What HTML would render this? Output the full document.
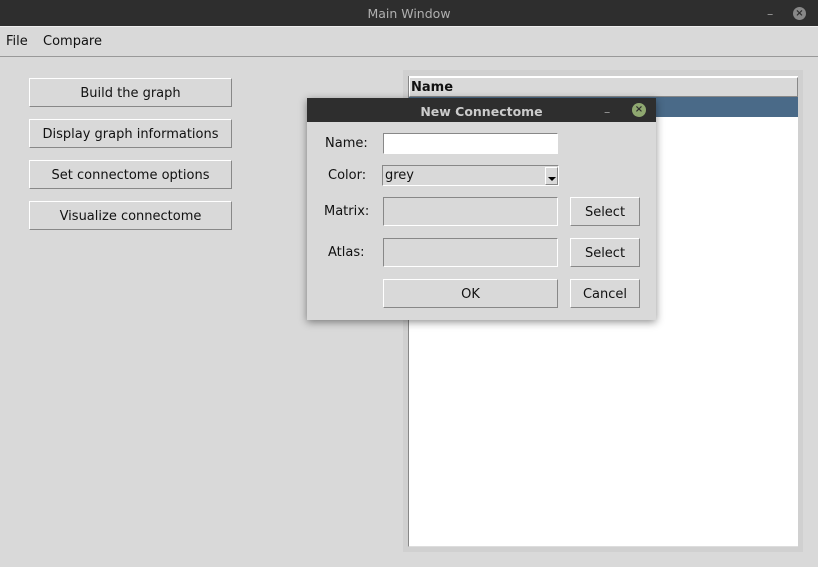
<!DOCTYPE html>
<html><head><style>
*{box-sizing:border-box;margin:0;padding:0}
body{width:818px;height:567px;background:#d9d9d9;font-family:"DejaVu Sans","Liberation Sans",sans-serif;font-size:13px;color:#111;position:relative;overflow:hidden}
.abs{position:absolute}
.tb{left:0;top:0;width:818px;height:26px;background:#2e2e2e;color:#b0b0b0;text-align:center;line-height:28px;font-size:12.5px}
.menu{left:0;top:26px;width:818px;height:31px;border-bottom:1px solid #999;border-top:1px solid #eee}
.btn{position:absolute;border:1px solid;border-color:#fff #888 #888 #fff;background:#d9d9d9;text-align:center;line-height:29px!important}
.ent{position:absolute;border:1px solid;border-color:#888 #fff #fff #888}
.lbl{position:absolute}
</style></head><body>
<div class="abs tb">Main Window
<span class="abs" style="left:767px;top:0;color:#999">–</span>
<span class="abs" style="left:793px;top:7px;width:13px;height:13px;border-radius:50%;background:#888;color:#2e2e2e;font-size:10px;line-height:13px;font-weight:bold">×</span></div>
<div class="abs menu"><span class="abs" style="left:6px;top:7px">File</span><span class="abs" style="left:43px;top:7px">Compare</span></div>

<div class="btn" style="left:29px;top:78px;width:203px;height:29px">Build the graph</div>
<div class="btn" style="left:29px;top:119px;width:203px;height:29px">Display graph informations</div>
<div class="btn" style="left:29px;top:160px;width:203px;height:29px">Set connectome options</div>
<div class="btn" style="left:29px;top:201px;width:203px;height:29px">Visualize connectome</div>

<div class="abs" style="left:403px;top:70px;width:400px;height:482px;background:#d0d0d0"></div>
<div class="abs" style="left:408px;top:76px;width:390px;height:471px;background:#fff;border-left:1px solid #888;border-bottom:1px solid #ddd"></div>
<div class="abs" style="left:409px;top:77px;width:389px;height:20px;background:#d9d9d9;border:1px solid;border-color:#fff #888 #888 #fff;font-weight:bold;padding-left:1px;line-height:20px">Name</div>
<div class="abs" style="left:409px;top:97px;width:389px;height:20px;background:#4a6a88"></div>

<div class="abs" style="left:307px;top:98px;width:349px;height:222px;background:#d9d9d9;box-shadow:0 2px 8px rgba(0,0,0,.45)">
<div class="abs" style="left:0;top:0;width:349px;height:24px;background:#2e2e2e;color:#ccc;text-align:center;line-height:27px;font-size:12.5px;font-weight:600">New Connectome
<span class="abs" style="left:297px;top:0;color:#999;font-weight:normal">–</span>
<span class="abs" style="left:325px;top:5px;width:14px;height:14px;border-radius:50%;background:#8fa870;color:#2e2e2e;font-size:10px;line-height:14px">×</span></div>
</div>
<div class="lbl" style="left:325px;top:136px">Name:</div>
<div class="ent" style="left:383px;top:133px;width:175px;height:21px;background:#fff"></div>
<div class="lbl" style="left:328px;top:168px">Color:</div>
<div class="ent" style="left:382px;top:165px;width:177px;height:21px;border-color:#888 #fff #fff #888;background:#d9d9d9;padding-left:2px;line-height:20px">grey</div>
<div class="abs" style="left:545px;top:167px;width:13px;height:18px;border:1px solid;border-color:#fff #888 #888 #fff;background:#d9d9d9"><div class="abs" style="left:2px;top:9px;border-left:4px solid transparent;border-right:4px solid transparent;border-top:4px solid #000"></div></div>
<div class="lbl" style="left:324px;top:204px">Matrix:</div>
<div class="ent" style="left:383px;top:197px;width:175px;height:29px"></div>
<div class="btn" style="left:570px;top:197px;width:70px;height:29px">Select</div>
<div class="lbl" style="left:328px;top:245px">Atlas:</div>
<div class="ent" style="left:383px;top:238px;width:175px;height:29px"></div>
<div class="btn" style="left:570px;top:238px;width:70px;height:29px">Select</div>
<div class="btn" style="left:383px;top:279px;width:175px;height:29px">OK</div>
<div class="btn" style="left:570px;top:279px;width:70px;height:29px">Cancel</div>
</body></html>
